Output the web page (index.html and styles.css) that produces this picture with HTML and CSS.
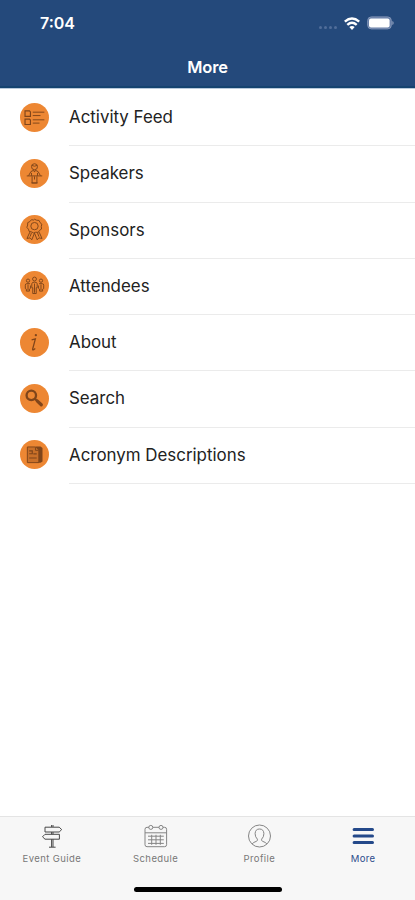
FILE: index.html
```html
<!DOCTYPE html>
<html lang="en">
<head>
  <meta charset="UTF-8">
  <meta name="viewport" content="width=device-width, initial-scale=1.0">
  <title>More</title>
  <link rel="stylesheet" href="styles.css">
</head>
<body>

<div class="screen">
  <!-- Header -->
  <header class="header">
    <div class="status-bar">
      <span class="time">7:04</span>
      <div class="status-icons">
        <span class="signal"><i></i><i></i><i></i><i></i></span>
        <svg class="wifi" width="16" height="13" viewBox="0 0 16 13" fill="none" stroke="#fff" stroke-width="2.4">
          <path d="M.8 4.6Q8-1.7 15.2 4.6"/>
          <path d="M3.3 7.9q4.7-4.2 9.4 0"/>
          <path d="M8 13 5.3 10q2.7-2.2 5.4 0z" fill="#fff" stroke="none"/>
        </svg>
        <svg class="battery" width="27" height="14" viewBox="0 0 27 14">
          <rect x=".7" y=".9" width="23.6" height="12" rx="3.6" fill="#637ba5" stroke="#8295b7"/>
          <rect x="2" y="2.4" width="20.6" height="9.2" rx="2" fill="#fff"/>
          <path d="M25.3 5v4q1.4-.6 1.4-2t-1.4-2z" fill="#8c9dbc"/>
        </svg>
      </div>
    </div>
    <h1 class="title">More</h1>
  </header>

  <!-- Menu -->
  <ul class="menu">
    <li class="row">
      <svg class="icon" viewBox="0 0 30 30">
        <circle cx="15" cy="15" r="15"/>
        <g stroke-width="1.2">
          <path d="M5.2 8.2h4.6l1 1v4.6H5.2zM5.2 16.6h4.6l1 1v4.6H5.2z"/>
          <path d="M13.2 9.5h12M13.2 13h8M13.2 17.4h12M13.2 20.8h7" stroke-width="1"/>
        </g>
      </svg>
      <span class="label">Activity Feed</span>
    </li>
    <li class="row">
      <svg class="icon" viewBox="0 0 30 30">
        <circle cx="15" cy="15" r="15"/>
        <circle class="line" cx="15" cy="8" r="3.1"/>
        <path d="M12.1 6.6q2.9 1.7 5.8 0M7 17.5h16M8.9 17.2l2.4-4.2 2.8-1.3.9 1.8.9-1.8 2.8 1.3 2.4 4.2M11.9 14.4v3M18.1 14.4v3M12.5 18v6.8h5V18M15 18v3.2M11.7 24.8h6.6"/>
      </svg>
      <span class="label">Speakers</span>
    </li>
    <li class="row">
      <svg class="icon" viewBox="0 0 30 30">
        <circle cx="15" cy="15" r="15"/>
        <path d="M15 4.4l2.2 1 2.5.2 1 2.2 1.9 1.7-.6 2.5.3 2.5-2.1 1.4-1.4 2.1-2.5-.2-2.3.8-2-1.1-2.5-.5-.8-2.3-1.6-1.9.8-2.4.1-2.5 2.2-1.1 1.6-1.9 2.4.3z"/>
        <circle class="line" cx="15" cy="11.5" r="3.8"/>
        <path d="M10.2 17.7l-3 6.6 3.2-.7 1.8 2.1 2.8-7 2.8 7 1.8-2.1 3.2.7-3-6.6M11.9 18.4l-1.5 4M18.1 18.4l1.5 4"/>
      </svg>
      <span class="label">Sponsors</span>
    </li>
    <li class="row">
      <svg class="icon" viewBox="0 0 30 30">
        <circle cx="15" cy="15" r="15"/>
        <circle class="line" cx="15" cy="8.3" r="2"/>
        <circle class="line" cx="8.3" cy="10" r="1.7"/>
        <circle class="line" cx="21.7" cy="10" r="1.7"/>
        <path d="M12.2 17.3v-4q0-1.8 2.8-1.8t2.8 1.8v4h-1v6h-3.6v-6zM15 13v9.5M10.3 13.1H7q-1.5 0-1.5 1.6v3.4l1.1.7v2h3.2v-2.1l1-.7v-3M8.3 14v6M19.7 13.1H23q1.5 0 1.5 1.6v3.4l-1.1.7v2h-3.2v-2.1l-1-.7v-3M21.7 14v6"/>
      </svg>
      <span class="label">Attendees</span>
    </li>
    <li class="row">
      <svg class="icon" viewBox="0 0 30 30">
        <circle cx="15" cy="15" r="15"/>
        <path d="M12 12.3l3.9-1-2.8 10.4q-.2 1.5 1 .8l1.7-1.4" stroke-width="1.3"/>
        <circle class="dot" cx="16.4" cy="7.4" r="1.2"/>
      </svg>
      <span class="label">About</span>
    </li>
    <li class="row">
      <svg class="icon" viewBox="0 0 30 30">
        <circle cx="15" cy="15" r="15"/>
        <circle class="line" cx="11.7" cy="11.7" r="4.9" stroke-width="2.4"/>
        <path d="M15.1 15.1l2.4 2.2" stroke-width="2.2"/>
        <path d="M18 17.7l4 3.8" stroke-width="3.4" stroke-linecap="round"/>
      </svg>
      <span class="label">Search</span>
    </li>
    <li class="row">
      <svg class="icon" viewBox="0 0 30 30">
        <circle cx="15" cy="15" r="15"/>
        <path class="dot" d="M16.5 6.6h4.7l2.1 1.8v13.8l-2 1.4h-4z"/>
        <path class="page" d="M7.6 7.2h8.7l3.2 3.2v13H7.6z"/>
        <path d="M16 7.5v3.2h3.2" stroke-width="1"/>
        <path d="M9.5 11.2h3.2v3H9.5M13.8 14.4h3.5M9.5 18.6h7.8" stroke-width="1.2"/>
      </svg>
      <span class="label">Acronym Descriptions</span>
    </li>
  </ul>

  <!-- Bottom tabs -->
  <nav class="tab-bar">
    <div class="tabs">
      <div class="tab">
        <svg class="tab-icon dark" viewBox="0 0 24 24">
          <path d="M11.6 3V1M13 3V1M5 3.2h14.2l2.5 2.4L19.2 8H5zM11.6 8v2.3M13 8v2.3M19.4 10.3H5l-2.5 2.5L5 15.2h14.4zM11.6 15.2V23M13 15.2V23M9 23.2h6.6"/>
        </svg>
        <span>Event Guide</span>
      </div>
      <div class="tab">
        <svg class="tab-icon" viewBox="0 0 24 24">
          <path d="M5 3.3H3q-2 0-2 2v15.4q0 2 2 2h17.6q2 0 2-2V5.3q0-2-2-2h-1.7M8.8 3.3h6.2M1 8.8h21.6M4 12.2h15.8M4 15.8h15.8M4 19.4h15.8M7.7 10.8v10M12 10.8v10M16.3 10.8v10"/>
          <circle cx="6.8" cy="3.4" r="2"/>
          <circle cx="17" cy="3.4" r="2"/>
        </svg>
        <span>Schedule</span>
      </div>
      <div class="tab">
        <svg class="tab-icon" viewBox="0 0 24 24">
          <circle cx="12.5" cy="12" r="11"/>
          <path d="M5.2 20q.5-1.5 4-2.6 1.7-.6 1.2-2.2-2.3-2.2-2.3-5.5Q8.3 5 12.5 5t4.4 4.7q0 3.3-2.3 5.5-.5 1.6 1.2 2.2 3.5 1.1 4 2.6"/>
        </svg>
        <span>Profile</span>
      </div>
      <div class="tab active">
        <svg class="tab-icon" viewBox="0 0 24 24">
          <path d="M3.1 5.6h18.4M3.1 12h18.4M3.1 18.4h18.4"/>
        </svg>
        <span>More</span>
      </div>
    </div>
    <div class="home-indicator"></div>
  </nav>
</div>

</body>
</html>
```

FILE: styles.css
```css
* {
  box-sizing: border-box;
}
body {
  margin: 0;
  font-family: Inter, "Liberation Sans", sans-serif;
  background: #fff;
}
.screen {
  height: 900px;
  display: flex;
  flex-direction: column;
}

/* Header */
.header {
  height: 88px;
  background: #24497b;
  border-bottom: 2px solid #154370;
  color: #fff;
  box-shadow: 0 1px 0 #b9cadb;
}
.status-bar {
  height: 46px;
  padding: 0 21px 0 40px;
  display: flex;
  justify-content: space-between;
  align-items: center;
}
.time {
  font-size: 16px;
  font-weight: 600;
}
.status-icons {
  display: flex;
  align-items: center;
  gap: 7px;
}
.signal {
  display: flex;
  gap: 2px;
  padding-top: 8px;
}
.signal i {
  width: 3px;
  height: 3px;
  border-radius: 50%;
  background: #506d99;
}
.title {
  margin: 0;
  font-size: 16.5px;
  font-weight: 600;
  line-height: 42px;
  text-align: center;
  letter-spacing: -0.2px;
}

/* Menu list */
.menu {
  flex: 1;
  margin: 2px 0 0;
  padding: 0;
  list-style: none;
}
.row {
  height: 56.25px;
  padding-left: 20px;
  display: flex;
  align-items: center;
  gap: 20px;
}
.icon {
  width: 29px;
  height: 29px;
  margin-bottom: 2px;
  fill: none;
  stroke: #80451a;
}
.icon > circle:first-child {
  fill: #ed8733;
  stroke: none;
}
.icon .dot {
  fill: #80451a;
  stroke: none;
}
.icon .page {
  fill: #c97029;
}
.label {
  flex: 1;
  height: 100%;
  border-bottom: 1px solid #ebebeb;
  color: #222;
  font-size: 16.9px;
  line-height: 55.5px;
}

/* Tab bar */
.tab-bar {
  height: 84px;
  background: #f7f7f7;
  border-top: 1px solid #e4e4e4;
}
.tabs {
  height: 67px;
  padding-top: 7px;
  display: grid;
  grid-template-columns: repeat(4, 1fr);
}
.tab {
  display: flex;
  flex-direction: column;
  align-items: center;
  color: #777;
  font-size: 9.5px;
  line-height: 12px;
  letter-spacing: 0.4px;
  gap: 5px;
}
.tab-icon {
  width: 24px;
  height: 24px;
  fill: none;
  stroke: #858585;
}
.tab-icon.dark {
  stroke: #484848;
}
.active {
  color: #2c4d8c;
}
.active .tab-icon {
  stroke: #24498a;
  stroke-width: 3;
  stroke-linecap: round;
}
.home-indicator {
  width: 148px;
  height: 5px;
  margin: 3px auto 0;
  border-radius: 3px;
  background: #000;
}
```
